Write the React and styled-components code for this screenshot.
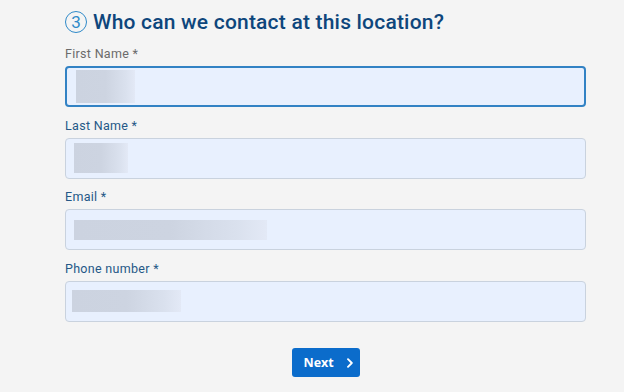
import React from 'react';
import styled, { createGlobalStyle } from 'styled-components';

const GlobalStyle = createGlobalStyle`
  html, body {
    margin: 0;
    padding: 0;
    background: #f4f4f4;
  }
  body {
    font-family: Roboto, "Noto Sans", Arial, sans-serif;
  }
`;

const fields = [
  { id: 'firstName', label: 'First Name *', blur: 59, tall: 33, focused: true },
  { id: 'lastName', label: 'Last Name *', blur: 54, tall: 30 },
  { id: 'email', label: 'Email *', blur: 193, tall: 20 },
  { id: 'phone', label: 'Phone number *', blur: 109, tall: 22, shift: -2 },
];

const App = () => {
  return (
    <>
      <GlobalStyle />
      <Page>
        <Heading>
          <StepBadge>3</StepBadge>
          <HeadingText>Who can we contact at this location?</HeadingText>
        </Heading>

        <Form onSubmit={(e) => e.preventDefault()}>
          {fields.map((field) => (
            <Field key={field.id}>
              <Label htmlFor={field.id} $focused={field.focused}>
                {field.label}
              </Label>
              <InputBox $focused={field.focused}>
                <Redacted
                  $width={field.blur}
                  $height={field.tall}
                  $shift={field.shift || 0}
                />
              </InputBox>
            </Field>
          ))}

          <Actions>
            <NextButton type="submit">
              Next
              <svg width="8" height="10" viewBox="0 0 8 10" aria-hidden="true">
                <path
                  d="M2 1.2 L5.8 5 L2 8.8"
                  fill="none"
                  stroke="#fff"
                  strokeWidth="1.9"
                  strokeLinecap="round"
                  strokeLinejoin="round"
                />
              </svg>
            </NextButton>
          </Actions>
        </Form>
      </Page>
    </>
  );
};

export default App;

const Page = styled.div`
  width: 624px;
  height: 392px;
  box-sizing: border-box;
  padding: 11px 38px 0 65px;
  overflow: hidden;
`;

const Heading = styled.h2`
  display: flex;
  align-items: center;
  gap: 6px;
  margin: 0;
  height: 22px;
`;

const StepBadge = styled.span`
  display: inline-flex;
  align-items: center;
  justify-content: center;
  box-sizing: border-box;
  width: 22px;
  height: 22px;
  border: 1.5px solid #2f8ac9;
  border-radius: 50%;
  color: #2f8ac9;
  font-size: 17px;
  font-weight: 400;
`;

const HeadingText = styled.span`
  color: #0e467c;
  font-size: 21px;
  font-weight: 500;
  letter-spacing: 0.2px;
`;

const Form = styled.form`
  display: flex;
  flex-direction: column;
  margin-top: 13px;
`;

const Field = styled.div`
  display: flex;
  flex-direction: column;
  margin-bottom: 10.5px;
`;

const Label = styled.label`
  font-size: 12.5px;
  font-weight: 400;
  letter-spacing: 0.3px;
  line-height: 15px;
  color: ${(p) => (p.$focused ? '#6b6b6b' : '#255887')};
  margin-bottom: 5px;
`;

const InputBox = styled.div`
  display: flex;
  align-items: center;
  box-sizing: border-box;
  height: 41px;
  padding: 0 ${(p) => (p.$focused ? '9px' : '8px')};
  background: #e8f0fe;
  border: ${(p) => (p.$focused ? '2px solid #3282c4' : '1px solid #c9d2de')};
  border-radius: 4px;
`;

const Redacted = styled.div`
  width: ${(p) => p.$width}px;
  height: ${(p) => p.$height}px;
  margin-left: ${(p) => p.$shift}px;
  background: linear-gradient(
    90deg,
    #ccd3e0 0%,
    #cdd4e1 50%,
    #dae1ee 85%,
    #e3e9f6 100%
  );
`;

const Actions = styled.div`
  display: flex;
  justify-content: center;
  padding-top: 16px;
`;

const NextButton = styled.button`
  display: inline-flex;
  align-items: center;
  gap: 12px;
  box-sizing: border-box;
  width: 68px;
  height: 29px;
  padding: 0 0 0 12px;
  background: #0b6ccb;
  color: #fff;
  border: none;
  border-radius: 3px;
  font-family: "Open Sans", Arial, sans-serif;
  font-size: 12.5px;
  font-weight: 700;
  cursor: pointer;
`;
